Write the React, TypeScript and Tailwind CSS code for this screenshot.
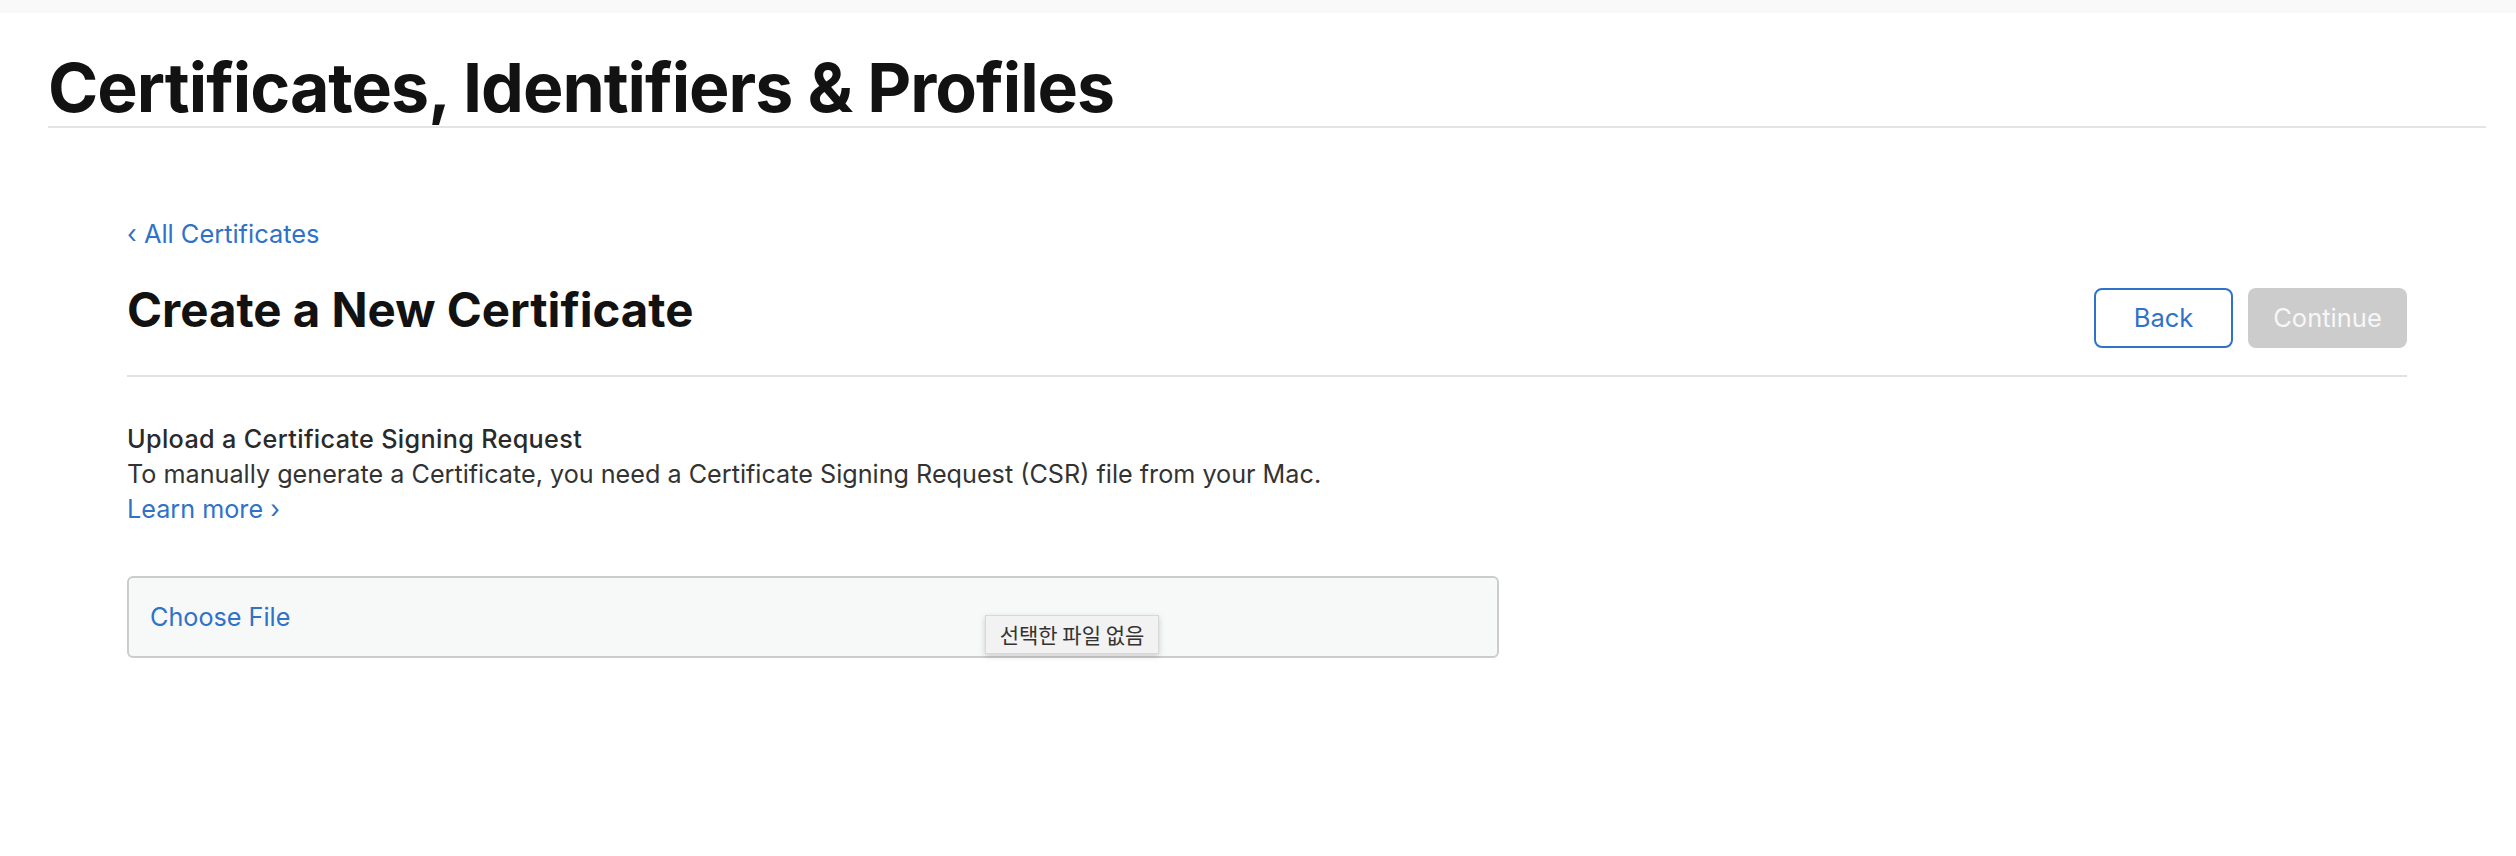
export default function App() {
  return (
    <div className="min-h-[856px] w-full bg-white font-['Inter','Noto_Sans_CJK_KR',sans-serif] text-[#121212]">
      {/* top strip */}
      <div className="h-[13px] bg-[#f9f9f9]" />

      {/* page title */}
      <div className="pl-[48px] pr-[30px]">
        <h1 className="mt-[39px] pb-[4px] text-[68px] leading-[70px] font-bold tracking-[-1px]">
          Certificates, Identifiers &amp; Profiles
        </h1>
        <div className="h-[2px] bg-[#e4e4e4]" />
      </div>

      {/* content */}
      <div className="pl-[127px] pr-[109px]">
        <a className="mt-[88px] block text-[25.4px] leading-[35px] text-[#2f72c8]">
          ‹ All Certificates
        </a>

        <div className="mt-[31px] flex items-start justify-between">
          <h2 className="text-[47.4px] leading-[56px] font-bold">Create a New Certificate</h2>
          <div className="mt-[6px] flex gap-[15px]">
            <button className="h-[60px] w-[139px] rounded-[8px] border-2 border-[#2f72c8] text-[25.5px] text-[#2f72c8]">
              Back
            </button>
            <button className="h-[60px] w-[159px] rounded-[8px] bg-[#cccccc] text-[25.5px] text-[#f7f7f7]">
              Continue
            </button>
          </div>
        </div>

        <div className="mt-[27px] h-[2px] bg-[#e2e2e2]" />

        <div className="mt-[45px] text-[25.2px] leading-[35px] text-[#333333]">
          <div className="font-medium tracking-[0.35px] text-[#2a2a2a]">Upload a Certificate Signing Request</div>
          <div>To manually generate a Certificate, you need a Certificate Signing Request (CSR) file from your Mac.</div>
          <a className="block text-[#2f72c8]">Learn more ›</a>
        </div>

        {/* file input */}
        <div className="relative mt-[49px] flex h-[82px] w-[1372px] items-center rounded-[6px] border-2 border-[#cccccc] bg-[#f7f8f8] pl-[21px]">
          <span className="text-[25.2px] leading-[35px] text-[#2f72c8]">Choose File</span>
          <div className="absolute left-[856px] top-[37px] flex h-[39px] w-[174px] items-center justify-center border border-[#d8d8d8] bg-[#f2f2f2] text-[21px] text-[#333333] shadow-[0_2px_6px_rgba(0,0,0,0.18)] font-['Noto_Sans_CJK_KR',sans-serif]">
            선택한 파일 없음
          </div>
        </div>
      </div>
    </div>
  );
}
